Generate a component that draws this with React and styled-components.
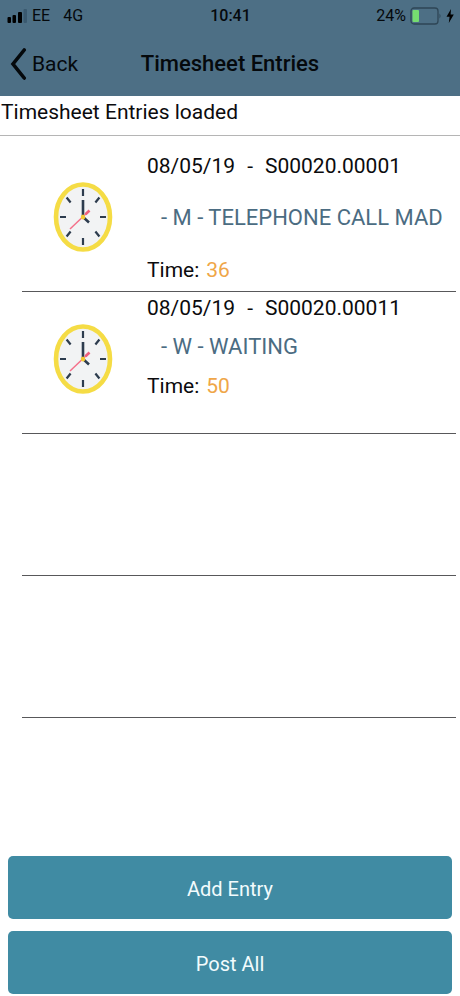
import React from 'react';
import styled, { createGlobalStyle } from 'styled-components';

const GlobalStyle = createGlobalStyle`
  *, *::before, *::after { box-sizing: border-box; }
  body {
    margin: 0;
    background: #fff;
    color: #0b0b0d;
    font-family: Roboto, "Liberation Sans", sans-serif;
  }
`;

const Screen = styled.div`
  display: flex;
  flex-direction: column;
  min-height: 100vh;
`;

const Header = styled.header`
  background: #4d6f85;
  color: #05090c;
`;

const StatusBar = styled.div`
  display: grid;
  grid-template-columns: 1fr auto 1fr;
  align-items: center;
  height: 32px;
  padding: 0 6px 0 7px;
  font-size: 16px;
  line-height: 20px;
`;

const StatusGroup = styled.div`
  display: flex;
  align-items: center;
  justify-content: ${(p) => (p.$end ? 'flex-end' : 'flex-start')};
  gap: ${(p) => (p.$end ? 4 : 5)}px;
`;

const Network = styled.span`
  margin-left: 8px;
`;

const Clock = styled.time`
  font-weight: 500;
`;

const NavBar = styled.nav`
  display: grid;
  grid-template-columns: 1fr auto 1fr;
  align-items: center;
  height: 64px;
  padding: 0 10px;
`;

const BackButton = styled.button`
  display: flex;
  align-items: center;
  justify-self: start;
  gap: 5px;
  padding: 0;
  border: 0;
  background: none;
  color: inherit;
  font: inherit;
  font-size: 21px;
  line-height: 32px;
  cursor: pointer;
`;

const Title = styled.h1`
  margin: 0;
  font-size: 22px;
  font-weight: 500;
  line-height: 32px;
`;

const Notice = styled.p`
  margin: 0;
  height: 40px;
  padding-left: 1px;
  border-bottom: 1px solid #b5b5b5;
  font-size: 21px;
  line-height: 32px;
`;

const EntryList = styled.ul`
  flex: 1;
  margin: 0;
  padding: 14px 4px 0 22px;
  list-style: none;
`;

const EntryRow = styled.li`
  display: flex;
  height: 142px;
  border-bottom: 1px solid #58585a;
`;

const IconCell = styled.div`
  display: flex;
  flex: none;
  justify-content: center;
  width: 122px;
  padding-top: 32px;
`;

const Details = styled.div`
  display: flex;
  flex-direction: column;
  gap: ${(p) => (p.$roomy ? 20 : 7)}px;
  padding-left: 3px;
  font-size: 21px;
  line-height: 32px;
  white-space: nowrap;
`;

const Heading = styled.div`
  display: flex;
  gap: 12px;
`;

const Activity = styled.div`
  padding-left: 14px;
  color: #4b6c82;
  font-size: 22px;
`;

const Duration = styled.div`
  display: flex;
  gap: 7px;
`;

const Minutes = styled.span`
  color: #efa648;
`;

const Actions = styled.footer`
  display: flex;
  flex-direction: column;
  gap: 12px;
  padding: 0 8px 2px;
`;

const ActionButton = styled.button`
  height: 63px;
  padding: 2px 0 0;
  border: 0;
  border-radius: 5px;
  background: #408ba3;
  color: #f2fbfd;
  font: inherit;
  font-size: 20px;
  cursor: pointer;
`;

const SignalIcon = () => (
  <svg width="20" height="14" viewBox="0 0 20 14" aria-hidden="true">
    <rect x="0.5" y="8" width="3.5" height="6" rx="1" />
    <rect x="5.5" y="6" width="3.5" height="8" rx="1" />
    <rect x="11" y="3" width="4" height="11" rx="1" />
    <rect x="16.5" y="0" width="3.5" height="14" rx="1" fill="#3b5a70" />
  </svg>
);

const BatteryIcon = () => (
  <svg width="32" height="18" viewBox="0 0 32 18" aria-hidden="true">
    <rect x="1" y="1" width="27" height="16" rx="3" fill="none" stroke="#2e4656" strokeWidth="1.3" />
    <rect x="2.5" y="3" width="6.5" height="12" rx="1" fill="#76dc70" />
    <path d="M29.5 6.5q2 2.5 0 5z" fill="#2e4656" />
  </svg>
);

const BoltIcon = () => (
  <svg width="8" height="14" viewBox="0 0 8 14" aria-hidden="true">
    <path d="M5 0 0.5 7.8H3.6L2.8 14 7.8 5.6H4.6z" />
  </svg>
);

const ChevronIcon = () => (
  <svg width="17" height="32" viewBox="0 0 17 32" aria-hidden="true">
    <path d="M14.2 2 3 16l11.2 14" fill="none" stroke="currentColor" strokeWidth="3.6" strokeLinecap="round" strokeLinejoin="miter" />
  </svg>
);

const ClockIcon = () => (
  <svg width="60" height="70" viewBox="0 0 60 70" aria-hidden="true">
    <ellipse cx="30" cy="35" rx="27" ry="32.5" fill="#f2f3f4" stroke="#f5dc45" strokeWidth="4.6" />
    <g fill="none" stroke="#2d3c4e" strokeWidth="2.2">
      <path d="M30 7v7M30 56v7M7 35h6M47 35h6" />
      <path d="M13.6 15.5l4 5M46.4 15.5l-4 5M13.6 54.5l4-5M46.4 54.5l-4-5" />
      <path d="M30 18v17l6 5.5" strokeWidth="2.6" />
    </g>
    <path d="M17 47 36 29" stroke="#f4708a" strokeWidth="1.5" />
    <path d="M32.5 32.3 36.5 28.5" stroke="#f05f7c" strokeWidth="2.6" />
    <ellipse cx="30" cy="35" rx="2.2" ry="2.6" fill="#f5c92f" />
  </svg>
);

const entries = [
  { date: '08/05/19', code: 'S00020.00001', activity: '- M - TELEPHONE CALL MAD', minutes: 36, roomy: true },
  { date: '08/05/19', code: 'S00020.00011', activity: '- W - WAITING', minutes: 50, roomy: false },
];

export default function App() {
  return (
    <>
      <GlobalStyle />
      <Screen>
        <Header>
          <StatusBar>
            <StatusGroup>
              <SignalIcon />
              <span>EE</span>
              <Network>4G</Network>
            </StatusGroup>
            <Clock>10:41</Clock>
            <StatusGroup $end>
              <span>24%</span>
              <BatteryIcon />
              <BoltIcon />
            </StatusGroup>
          </StatusBar>
          <NavBar>
            <BackButton type="button">
              <ChevronIcon />
              Back
            </BackButton>
            <Title>Timesheet Entries</Title>
          </NavBar>
        </Header>
        <Notice role="status">Timesheet Entries loaded</Notice>
        <EntryList>
          {entries.map((entry) => (
            <EntryRow key={entry.code}>
              <IconCell>
                <ClockIcon />
              </IconCell>
              <Details $roomy={entry.roomy}>
                <Heading>
                  <span>{entry.date}</span>
                  <span>-</span>
                  <span>{entry.code}</span>
                </Heading>
                <Activity>{entry.activity}</Activity>
                <Duration>
                  <span>Time:</span>
                  <Minutes>{entry.minutes}</Minutes>
                </Duration>
              </Details>
            </EntryRow>
          ))}
          <EntryRow aria-hidden="true" />
          <EntryRow aria-hidden="true" />
        </EntryList>
        <Actions>
          <ActionButton type="button">Add Entry</ActionButton>
          <ActionButton type="button">Post All</ActionButton>
        </Actions>
      </Screen>
    </>
  );
}
